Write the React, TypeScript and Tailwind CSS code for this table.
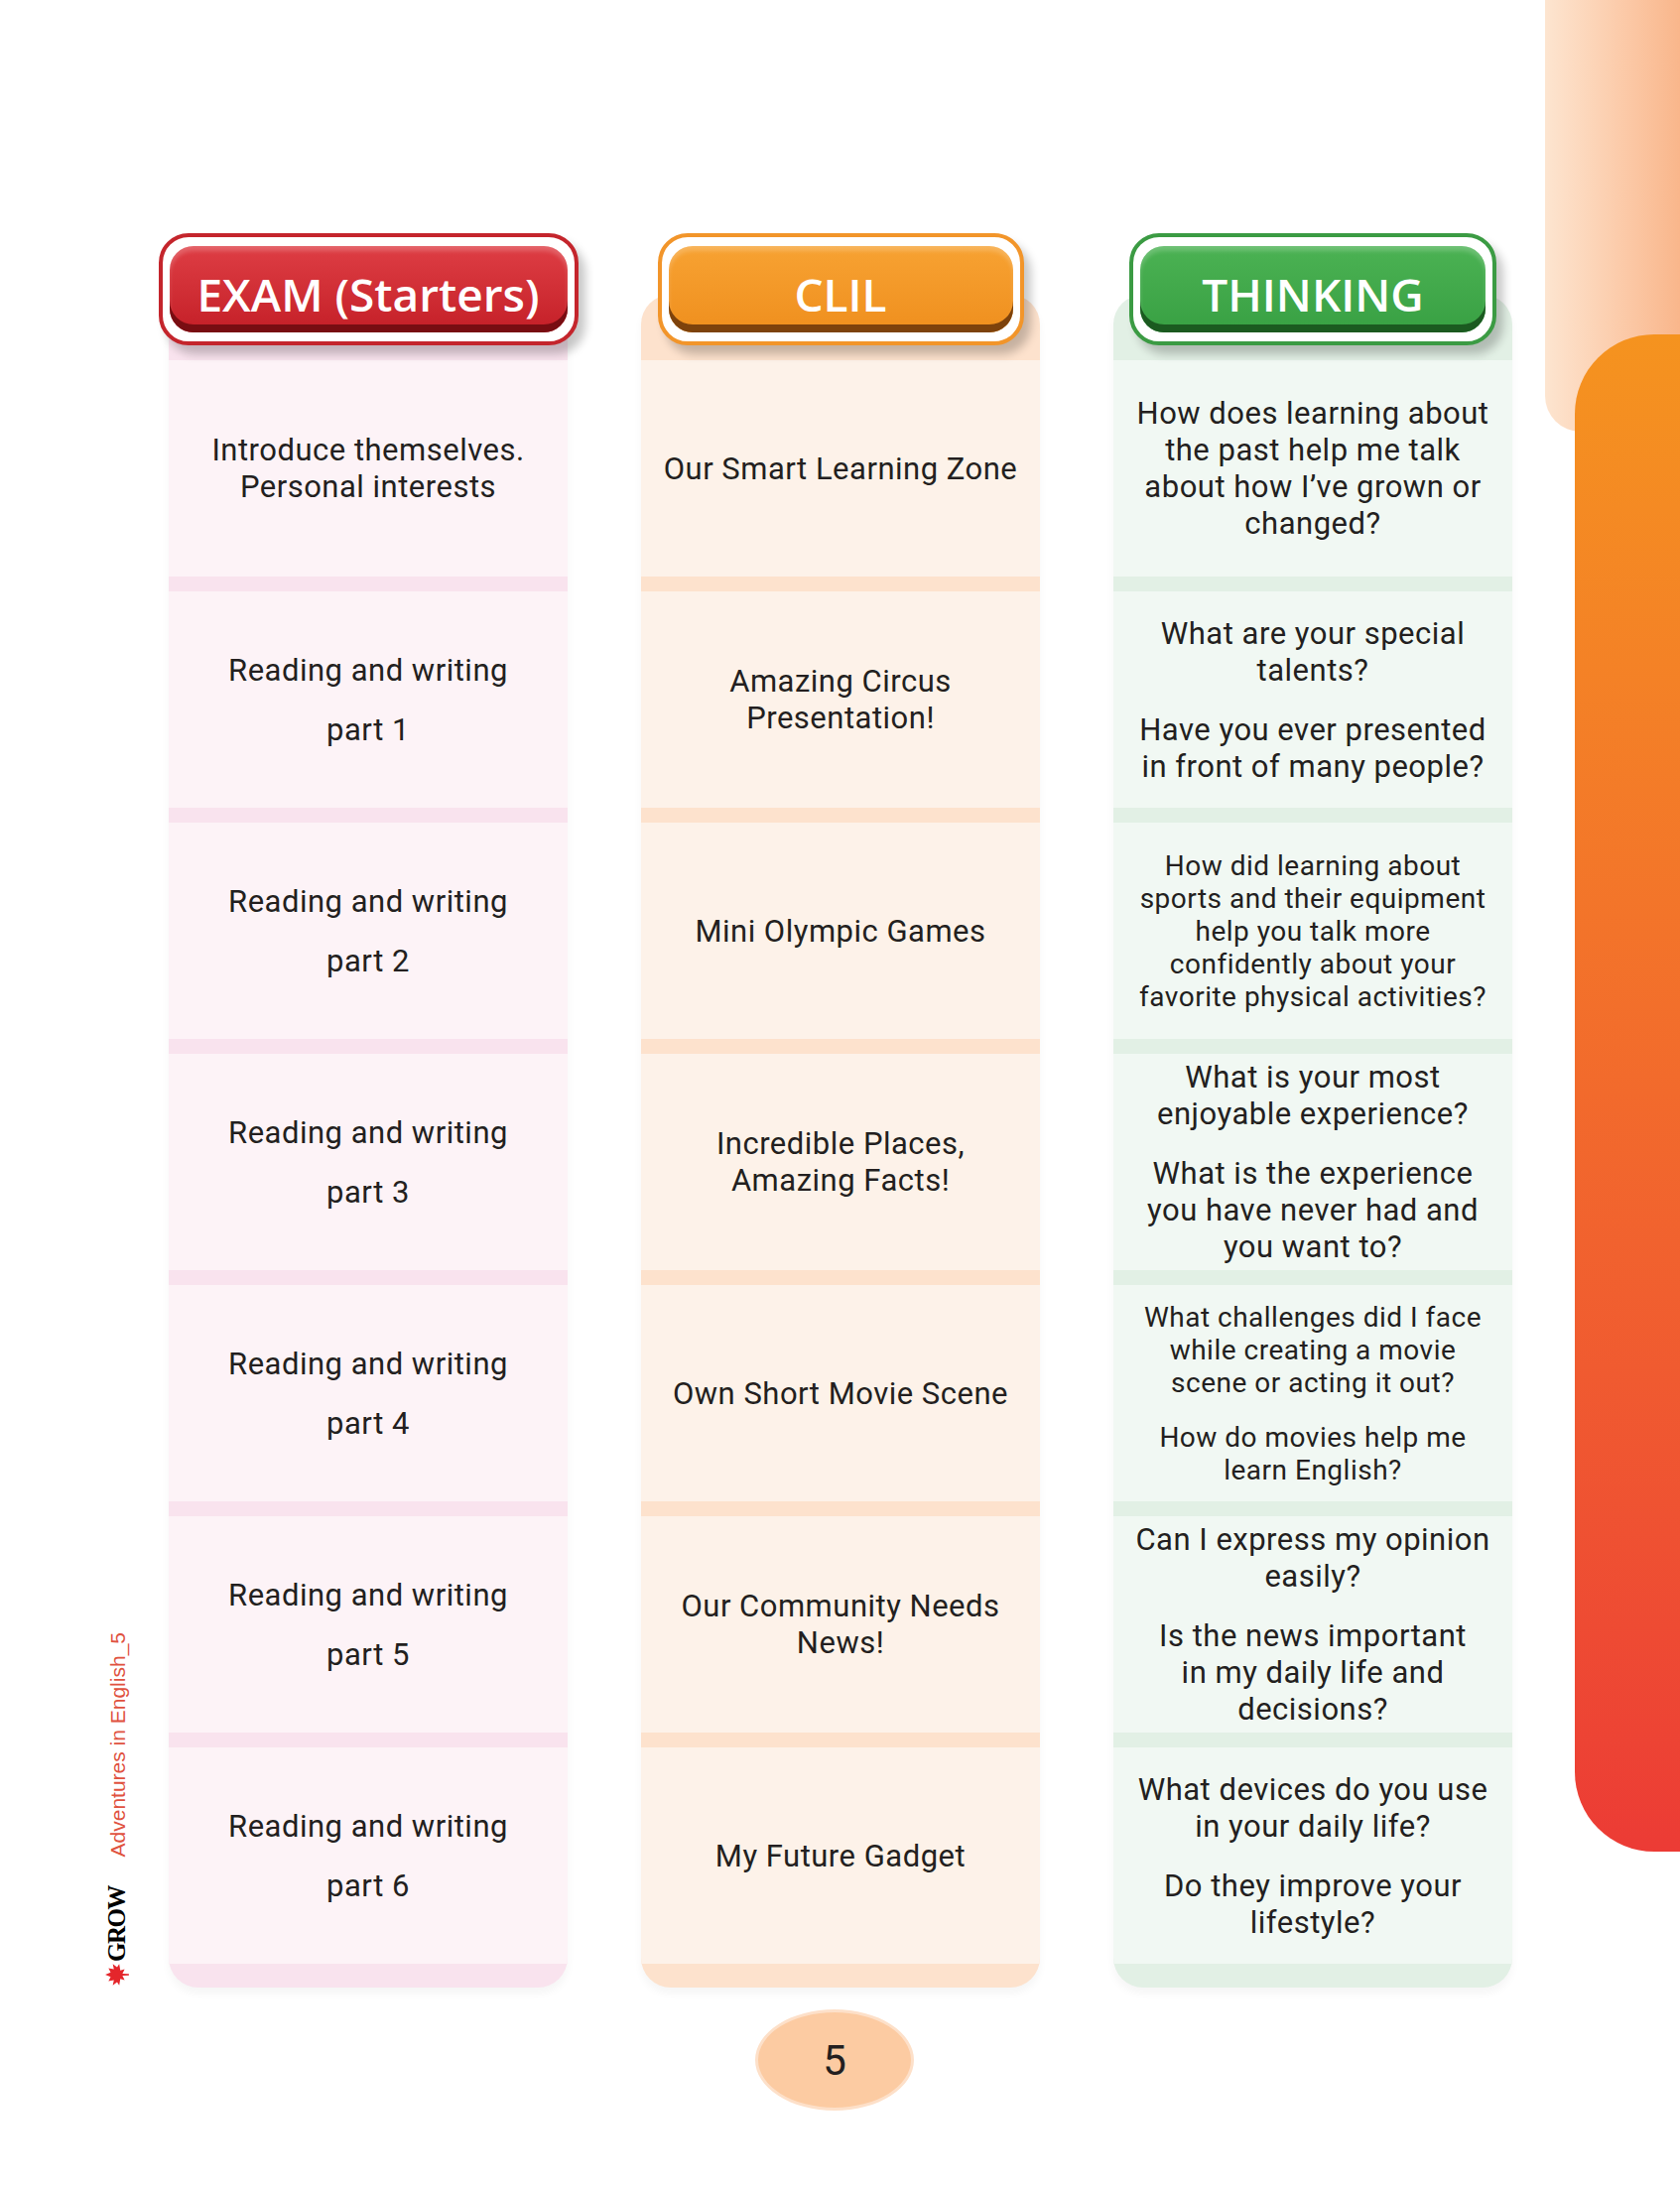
import { Fragment } from "react";

type Row = { paras: string[][]; small?: boolean };

type Column = {
  title: string;
  pillW: string;
  border: string;
  inner: string;
  light: string;
  stripe: string;
  rows: Row[];
};

const rw = (n: number): Row => ({ paras: [["Reading and writing"], [`part ${n}`]] });

const columns: Column[] = [
  {
    title: "EXAM (Starters)",
    pillW: "w-[423px]",
    border: "border-[#c4252c]",
    inner: "bg-gradient-to-b from-[#de3d44] to-[#c41e27] shadow-[inset_0_-8px_0_#780d12,inset_0_5px_4px_rgba(255,255,255,0.2)]",
    light: "bg-[#fdf3f7]",
    stripe: "bg-[#f9e3ee]",
    rows: [
      { paras: [["Introduce themselves.", "Personal interests"]] },
      rw(1),
      rw(2),
      rw(3),
      rw(4),
      rw(5),
      rw(6),
    ],
  },
  {
    title: "CLIL",
    pillW: "w-[369px]",
    border: "border-[#f2952a]",
    inner: "bg-gradient-to-b from-[#f7a232] to-[#ef8f1d] shadow-[inset_0_-8px_0_#7d420c,inset_0_5px_4px_rgba(255,255,255,0.2)]",
    light: "bg-[#fdf2e9]",
    stripe: "bg-[#fde2cd]",
    rows: [
      { paras: [["Our Smart Learning Zone"]] },
      { paras: [["Amazing Circus", "Presentation!"]] },
      { paras: [["Mini Olympic Games"]] },
      { paras: [["Incredible Places,", "Amazing Facts!"]] },
      { paras: [["Own Short Movie Scene"]] },
      { paras: [["Our Community Needs", "News!"]] },
      { paras: [["My Future Gadget"]] },
    ],
  },
  {
    title: "THINKING",
    pillW: "w-[370px]",
    border: "border-[#3b9b43]",
    inner: "bg-gradient-to-b from-[#4bb253] to-[#38a043] shadow-[inset_0_-8px_0_#1b5a20,inset_0_5px_4px_rgba(255,255,255,0.2)]",
    light: "bg-[#f1f8f3]",
    stripe: "bg-[#e2f0e5]",
    rows: [
      { paras: [["How does learning about", "the past help me talk", "about how I’ve grown or", "changed?"]] },
      { paras: [["What are your special", "talents?"], ["Have you ever presented", "in front of many people?"]] },
      {
        small: true,
        paras: [["How did learning about", "sports and their equipment", "help you talk more", "confidently about your", "favorite physical activities?"]],
      },
      { paras: [["What is your most", "enjoyable experience?"], ["What is the experience", "you have never had and", "you want to?"]] },
      {
        small: true,
        paras: [["What challenges did I face", "while creating a movie", "scene or acting it out?"], ["How do movies help me", "learn English?"]],
      },
      { paras: [["Can I express my opinion", "easily?"], ["Is the news important", "in my daily life and", "decisions?"]] },
      { paras: [["What devices do you use", "in your daily life?"], ["Do they improve your", "lifestyle?"]] },
    ],
  },
];

const Leaf = () => (
  <svg width="26" height="26" viewBox="0 0 24 24" className="-rotate-90">
    <path
      d="M12 1 L14 6 L18 4 L17 9 L22 8 L19 12 L22 14 L16 15 L17 19 L13 17 L12.6 23 L11.4 23 L11 17 L7 19 L8 15 L2 14 L5 12 L2 8 L7 9 L6 4 L10 6 Z"
      fill="#e4262b"
    />
  </svg>
);

const App = () => {
  return (
    <div className="relative h-[2205px] w-[1693px] overflow-hidden bg-white font-['Roboto',sans-serif] text-[#231f20]">
      {/* page edge decoration */}
      <div className="absolute left-[1557px] top-0 h-[435px] w-[136px] rounded-bl-[36px] bg-gradient-to-r from-[#fde5d0] to-[#f9b68b]" />
      <div className="absolute left-[1587px] top-[337px] h-[1529px] w-[160px] rounded-l-[80px] bg-gradient-to-b from-[#f5931f] via-[#f26a2c] to-[#ec3b35]" />

      <div className="flex flex-col pt-[235px]">
        <div className="flex">
          <div className="flex w-[170px] flex-col items-end justify-end pr-[40px]">
            <div className="rotate-180 font-['Liberation_Sans',sans-serif] text-[21px] leading-[23px] text-[#e0523f] [writing-mode:vertical-rl]">
              Adventures in English_5
            </div>
            <div className="mt-[30px] rotate-180 font-['Liberation_Serif',serif] text-[25px] font-bold leading-[25px] tracking-[-1.5px] text-black [writing-mode:vertical-rl]">
              GROW
            </div>
            <div className="mr-[-1px]">
              <Leaf />
            </div>
          </div>

          <div className="flex gap-[74px]">
            {columns.map((col) => (
              <div key={col.title} className="flex w-[402px] flex-col items-center">
                <div
                  className={`relative z-10 h-[113px] ${col.pillW} rounded-[30px] border-[4px] ${col.border} bg-white px-[7px] py-[9px] shadow-[7px_9px_10px_rgba(0,0,0,0.22)]`}
                >
                  <div
                    className={`flex h-full items-center justify-center rounded-[24px] pt-[10px] font-['Open_Sans',sans-serif] text-[46px] font-semibold text-white ${col.inner}`}
                  >
                    {col.title}
                  </div>
                </div>
                <div
                  className={`-mt-[51px] flex w-full flex-col gap-[15px] overflow-hidden rounded-[30px] pb-[24px] pt-[66px] shadow-[0_6px_8px_rgba(0,0,0,0.04)] ${col.stripe}`}
                >
                  {col.rows.map((row, i) => (
                    <div
                      key={i}
                      className={`flex h-[218px] flex-col items-center justify-center text-center tracking-[0.5px] ${col.light} ${
                        row.small ? "gap-[22px] text-[28px] leading-[33px]" : "gap-[23px] text-[31px] leading-[37px]"
                      }`}
                    >
                      {row.paras.map((p, j) => (
                        <p key={j}>
                          {p.map((line, k) => (
                            <Fragment key={k}>
                              {k > 0 && <br />}
                              {line}
                            </Fragment>
                          ))}
                        </p>
                      ))}
                    </div>
                  ))}
                </div>
              </div>
            ))}
          </div>
        </div>

        <div className="flex justify-center pr-[11px] pt-[22px]">
          <div className="flex h-[102px] w-[160px] items-center justify-center rounded-[50%] border-[3px] border-[#fde0c9] bg-[#fccba2] text-[42px] font-normal">
            5
          </div>
        </div>
      </div>
    </div>
  );
};

export default App;
